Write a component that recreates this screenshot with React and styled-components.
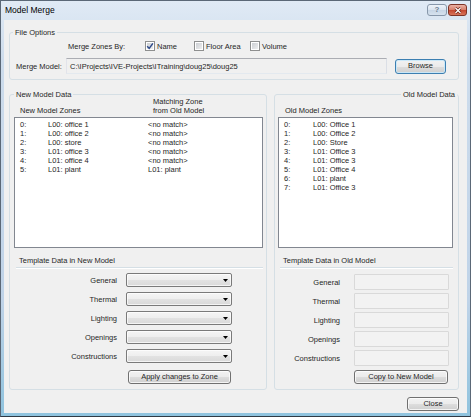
import React from "react";
import styled, { createGlobalStyle } from "styled-components";

const GlobalStyle = createGlobalStyle`
  html, body {
    margin: 0;
    padding: 0;
  }
  body {
    width: 471px;
    height: 417px;
    overflow: hidden;
    background: #fff;
    font-family: "Liberation Sans", Arial, sans-serif;
  }
`;

const Window = styled.div`
  box-sizing: border-box;
  width: 471px;
  height: 417px;
  display: flex;
  flex-direction: column;
  padding: 0 3px 3px;
  border: 1px solid #5b6877;
  border-bottom-color: #2f3a45;
  background: linear-gradient(#e0eaf5, #cddcec 60px, #bfd3e8 300px, #8fc3de);
`;

const TitleBar = styled.div`
  box-sizing: border-box;
  height: 19px;
  display: flex;
  align-items: center;
  padding: 0 0 2px 1px;
  font-size: 8.5px;
  color: #000;
`;

const CaptionButtons = styled.div`
  display: flex;
  gap: 1px;
  margin-left: auto;
  align-self: flex-start;
  margin-top: 3px;
`;

const CaptionButton = styled.div`
  box-sizing: border-box;
  width: ${(p) => p.$w}px;
  height: 12px;
  display: flex;
  align-items: center;
  justify-content: center;
  border-radius: 3px;
  border: 1px solid ${(p) => (p.$close ? "#7e3427" : "#8797aa")};
  background: ${(p) =>
    p.$close
      ? "linear-gradient(#eab1a4, #d9826e 45%, #c54a33 55%, #d9765c)"
      : "linear-gradient(#eef3f9, #dbe5f0 45%, #c8d6e6 55%, #d6e2ee)"};
  font-size: 8px;
  font-weight: bold;
  color: #6d7d92;
  line-height: 8px;
`;

const Client = styled.div`
  flex: 1;
  display: flex;
  flex-direction: column;
  padding: 8px 8px 2px 5px;
  background: #f0f0f0;
  color: #262626;
  font-size: 7.5px;
  line-height: 9px;
`;

const GroupBox = styled.fieldset`
  margin: 0;
  min-width: 0;
  display: flex;
  flex-direction: column;
  padding: ${(p) => p.$pad};
  border: 1px solid #d5dfe5;
  border-radius: 3px;
`;

const Legend = styled.legend`
  padding: 0 2px;
  line-height: 9px;
  margin-left: ${(p) => (p.$right ? "auto" : `${p.$inset || 0}px`)};
  margin-right: ${(p) => (p.$right ? "-4px" : "0")};
`;

const OptionRow = styled.div`
  display: flex;
  align-items: center;
  height: ${(p) => p.$h}px;
  margin-top: ${(p) => p.$top}px;
  padding-left: ${(p) => p.$indent || 0}px;
  white-space: nowrap;
`;

const FieldLabel = styled.span`
  flex: none;
  width: ${(p) => p.$w}px;
`;

const CheckItem = styled.label`
  flex: none;
  display: flex;
  align-items: center;
  gap: 2px;
  width: ${(p) => (p.$w ? `${p.$w}px` : "auto")};
`;

const CheckBox = styled.span`
  box-sizing: border-box;
  width: 10px;
  height: 10px;
  display: flex;
  align-items: center;
  justify-content: center;
  border: 1px solid #8e8f8f;
  background: linear-gradient(135deg, #c6cacf, #f3f3f3);
  box-shadow: inset 0 0 0 1px #fff;
`;

const PathField = styled.div`
  box-sizing: border-box;
  flex: none;
  width: ${(p) => p.$w}px;
  height: 16px;
  padding: 0 3px;
  display: flex;
  align-items: center;
  border: 1px solid;
  border-color: #abadb3 #dbdfe6 #e3e9ef #e2e3ea;
  background: #f0f0f0;
  overflow: hidden;
`;

const Button = styled.button`
  box-sizing: border-box;
  flex: none;
  width: ${(p) => p.$w}px;
  height: ${(p) => p.$h || 14}px;
  margin-left: ${(p) => p.$left || 0}px;
  padding: 0;
  font: inherit;
  color: inherit;
  line-height: 10px;
  border: 1px solid ${(p) => (p.$default ? "#3c7fb1" : "#707070")};
  border-radius: 3px;
  background: linear-gradient(#f2f2f2, #ebebeb 50%, #dddddd 51%, #cfcfcf);
  box-shadow: inset 0 0 0 1px
    ${(p) => (p.$default ? "rgba(200, 232, 250, 0.9)" : "rgba(255, 255, 255, 0.75)")};
`;

const DataRow = styled.div`
  display: grid;
  grid-template-columns: 258px 185px;
  column-gap: 7px;
  margin-top: 10px;
`;

const Heads = styled.div`
  display: grid;
  grid-template-columns: ${(p) => p.$cols};
  align-items: end;
  height: 18px;
  margin-top: -2px;
  padding-left: ${(p) => p.$indent}px;
  white-space: nowrap;
`;

const ListBox = styled.div`
  box-sizing: border-box;
  height: 131px;
  margin-top: 2px;
  padding: 2px 0 0 5px;
  border: 1px solid #828790;
  background: #fff;
`;

const ListRow = styled.div`
  display: grid;
  grid-template-columns: ${(p) => p.$cols};
  height: 9px;
  white-space: nowrap;
`;

const SectionLabel = styled.div`
  margin-top: 8px;
  padding-left: 5px;
  white-space: nowrap;
`;

const Separator = styled.div`
  margin: 2px 0 0 2px;
  border-top: 1px solid #d5dfe5;
  border-bottom: 1px solid #fff;
`;

const FormGrid = styled.div`
  display: grid;
  grid-template-columns: ${(p) => p.$cols};
  column-gap: ${(p) => p.$gap}px;
  row-gap: ${(p) => p.$rowGap}px;
  margin-top: ${(p) => p.$top}px;
  align-items: center;
`;

const FormLabel = styled.div`
  text-align: right;
  white-space: nowrap;
  color: #262626;
`;

const Combo = styled.div`
  box-sizing: border-box;
  height: 14px;
  display: flex;
  align-items: center;
  justify-content: flex-end;
  padding-right: 3px;
  border: 1px solid #7a7a7a;
  border-radius: 2px;
  background: linear-gradient(#f5f5f5, #eeeeee 50%, #e2e2e2 51%, #d9d9d9);
  box-shadow: inset 0 0 0 1px rgba(255, 255, 255, 0.7);
`;

const ReadOnlyBox = styled.div`
  box-sizing: border-box;
  height: 16px;
  border: 1px solid #d9d9d9;
  border-radius: 1px;
  background: #f2f2f2;
`;

const ActionRow = styled.div`
  display: flex;
  margin-top: ${(p) => p.$top}px;
  padding-left: ${(p) => p.$indent}px;
`;

const Footer = styled.div`
  display: flex;
  justify-content: flex-end;
  margin-top: 7px;
`;

const Tick = () => (
  <svg width="8" height="8" viewBox="0 0 8 8">
    <path d="M1.2 4.2 L3.2 6.4 L6.9 1.4" fill="none" stroke="#2e4a8a" strokeWidth="1.5" />
  </svg>
);

const Arrow = () => (
  <svg width="5" height="3" viewBox="0 0 5 3">
    <path d="M0 0 H5 L2.5 3 Z" fill="#000" />
  </svg>
);

const CloseGlyph = () => (
  <svg width="8" height="7" viewBox="0 0 8 7">
    <path d="M1.5 1 L6.5 6 M6.5 1 L1.5 6" stroke="#6b1f14" strokeWidth="2.6" />
    <path d="M1.5 1 L6.5 6 M6.5 1 L1.5 6" stroke="#fff" strokeWidth="1.3" />
  </svg>
);

const newZones = [
  ["0:", "L00: office 1", "<no match>"],
  ["1:", "L00: office 2", "<no match>"],
  ["2:", "L00: store", "<no match>"],
  ["3:", "L01: office 3", "<no match>"],
  ["4:", "L01: office 4", "<no match>"],
  ["5:", "L01: plant", "L01: plant"],
];

const oldZones = [
  ["0:", "L00: Office 1"],
  ["1:", "L00: Office 2"],
  ["2:", "L00: Store"],
  ["3:", "L01: Office 3"],
  ["4:", "L01: Office 3"],
  ["5:", "L01: Office 4"],
  ["6:", "L01: plant"],
  ["7:", "L01: Office 3"],
];

const templates = ["General", "Thermal", "Lighting", "Openings", "Constructions"];

const App = () => {
  return (
    <Window>
      <GlobalStyle />
      <TitleBar>
        Model Merge
        <CaptionButtons>
          <CaptionButton $w={20}>?</CaptionButton>
          <CaptionButton $w={19} $close>
            <CloseGlyph />
          </CaptionButton>
        </CaptionButtons>
      </TitleBar>

      <Client>
        <GroupBox $pad="3px 12px 5px 6px">
          <Legend $inset={-3}>File Options</Legend>
          <OptionRow $h={12} $top={0} $indent={52}>
            <FieldLabel $w={77}>Merge Zones By:</FieldLabel>
            <CheckItem $w={49}>
              <CheckBox>
                <Tick />
              </CheckBox>
              Name
            </CheckItem>
            <CheckItem $w={56}>
              <CheckBox />
              Floor Area
            </CheckItem>
            <CheckItem>
              <CheckBox />
              Volume
            </CheckItem>
          </OptionRow>
          <OptionRow $h={16} $top={6}>
            <FieldLabel $w={50}>Merge Model:</FieldLabel>
            <PathField $w={321}>C:\IProjects\IVE-Projects\ITraining\doug25\doug25</PathField>
            <Button $w={51} $h={15} $left={8} $default>
              Browse
            </Button>
          </OptionRow>
        </GroupBox>

        <DataRow>
          <GroupBox $pad="0 3px 5px 4px">
            <Legend>New Model Data</Legend>
            <Heads $cols="133px 1fr" $indent={6}>
              <div>New Model Zones</div>
              <div>
                Matching Zone
                <br />
                from Old Model
              </div>
            </Heads>
            <ListBox>
              {newZones.map(([idx, name, match]) => (
                <ListRow key={idx} $cols="28px 100px 1fr">
                  <span>{idx}</span>
                  <span>{name}</span>
                  <span>{match}</span>
                </ListRow>
              ))}
            </ListBox>
            <SectionLabel>Template Data in New Model</SectionLabel>
            <Separator />
            <FormGrid $cols="103px 106px" $gap={9} $rowGap={5} $top={4}>
              {templates.map((t) => (
                <React.Fragment key={t}>
                  <FormLabel>{t}</FormLabel>
                  <Combo>
                    <Arrow />
                  </Combo>
                </React.Fragment>
              ))}
            </FormGrid>
            <ActionRow $top={7} $indent={114}>
              <Button $w={103}>Apply changes to Zone</Button>
            </ActionRow>
          </GroupBox>

          <GroupBox $pad="0 5px 5px 3px">
            <Legend $right>Old Model Data</Legend>
            <Heads $cols="1fr" $indent={7}>
              <div>Old Model Zones</div>
            </Heads>
            <ListBox>
              {oldZones.map(([idx, name]) => (
                <ListRow key={idx} $cols="29px 1fr">
                  <span>{idx}</span>
                  <span>{name}</span>
                </ListRow>
              ))}
            </ListBox>
            <SectionLabel>Template Data in Old Model</SectionLabel>
            <Separator />
            <FormGrid $cols="62px 95px" $gap={14} $rowGap={3} $top={5}>
              {templates.map((t) => (
                <React.Fragment key={t}>
                  <FormLabel>{t}</FormLabel>
                  <ReadOnlyBox />
                </React.Fragment>
              ))}
            </FormGrid>
            <ActionRow $top={4} $indent={76}>
              <Button $w={94}>Copy to New Model</Button>
            </ActionRow>
          </GroupBox>
        </DataRow>

        <Footer>
          <Button $w={52}>Close</Button>
        </Footer>
      </Client>
    </Window>
  );
};

export default App;
